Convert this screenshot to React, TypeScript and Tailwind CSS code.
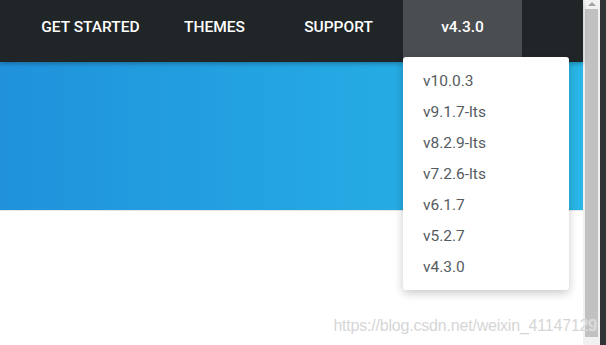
import React from "react";

const versions = ["v10.0.3", "v9.1.7-lts", "v8.2.9-lts", "v7.2.6-lts", "v6.1.7", "v5.2.7", "v4.3.0"];
const navItems = ["GET STARTED", "THEMES", "SUPPORT"];

export default function App() {
  return (
    <div className="relative flex h-[345px] w-[606px] overflow-hidden bg-white" style={{ fontFamily: "Roboto, 'Liberation Sans', sans-serif" }}>
      <main className="relative flex-1">
        <nav className="relative z-10 flex h-[62px] gap-[5px] bg-[#202528] pl-[31px] shadow-[0_2px_4px_rgba(0,0,0,0.25)]">
          {navItems.map((item) => (
            <a key={item} className="flex h-full w-[119px] justify-center pt-[17px] text-[15.5px] font-medium leading-[20px] text-white">
              {item}
            </a>
          ))}
          <a className="flex h-full w-[119px] justify-center bg-[#4a4e51] pt-[17px] text-[15.5px] font-medium leading-[20px] text-white">
            v4.3.0
          </a>
        </nav>
        <section className="h-[149px] border-b border-[#e6e6e6] bg-gradient-to-r from-[#2092dc] to-[#29b7e7]" />

        <ul className="absolute left-[403px] top-[57px] z-20 w-[166px] rounded-[3px] bg-white pt-[9px] pb-[7px] shadow-[0_3px_10px_rgba(0,0,0,0.22)]">
          {versions.map((v) => (
            <li key={v} className="pl-[20px] text-[15.5px] leading-[31px] text-[#555b60]">
              {v}
            </li>
          ))}
        </ul>
      </main>

      <div className="flex w-[23px]">
        <div className="relative w-[17px] bg-[#f1f1f1]">
          <div className="mx-auto mt-[2px] h-0 w-0 border-x-[4px] border-b-[4px] border-x-transparent border-b-[#a3a3a3]" />
          <div className="absolute left-[2px] top-[9px] h-[328px] w-[13px] bg-[#c1c1c1]" />
        </div>
        <div className="flex-1 bg-[#2f3336]" />
      </div>

      <div className="pointer-events-none absolute bottom-[7px] right-[9px] z-30 text-[16px] tracking-[-0.2px] text-[#d6d6d6] [text-shadow:0_0_1px_rgba(255,255,255,0.9)]" style={{ fontFamily: "'Liberation Sans', Arial, sans-serif" }}>
        https://blog.csdn.net/weixin_41147129
      </div>
    </div>
  );
}
